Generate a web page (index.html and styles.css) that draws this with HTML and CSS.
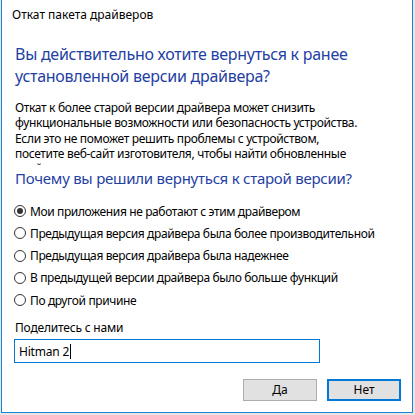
FILE: index.html
```html
<!DOCTYPE html>
<html lang="ru">
<head>
<meta charset="utf-8">
<title>Откат пакета драйверов</title>
<link rel="stylesheet" href="styles.css">
</head>
<body>
<div class="window">
  <div class="titlebar">Откат пакета драйверов</div>
  <div class="content">
    <h1 class="instruction">Вы действительно хотите вернуться к ранее<br>установленной версии драйвера?</h1>
    <div class="desc">
      <div class="line">Откат к более старой версии драйвера может снизить</div>
      <div class="line">функциональные возможности или безопасность устройства.</div>
      <div class="line">Если это не поможет решить проблемы с устройством,</div>
      <div class="line">посетите веб-сайт изготовителя, чтобы найти обновленные</div>
      <div class="line">драйверы.</div>
    </div>
    <h2 class="instruction second">Почему вы решили вернуться к старой версии?</h2>
    <div class="options">
      <div class="option"><span class="radio checked"></span><span>Мои приложения не работают с этим драйвером</span></div>
      <div class="option"><span class="radio"></span><span>Предыдущая версия драйвера была более производительной</span></div>
      <div class="option"><span class="radio"></span><span>Предыдущая версия драйвера была надежнее</span></div>
      <div class="option"><span class="radio"></span><span>В предыдущей версии драйвера было больше функций</span></div>
      <div class="option"><span class="radio"></span><span>По другой причине</span></div>
    </div>
    <div class="share-label">Поделитесь с нами</div>
    <div class="textbox"><span>Hitman 2</span><span class="caret"></span></div>
  </div>
  <div class="buttons">
    <div class="btn">Да</div>
    <div class="btn default">Нет</div>
  </div>
</div>
</body>
</html>
```
FILE: styles.css
```css
html, body {
  margin: 0;
  padding: 0;
}
body {
  width: 415px;
  height: 415px;
  background: #e6e6e6;
  font-family: "Noto Sans", "DejaVu Sans", sans-serif;
  font-size: 12px;
  color: #000;
  overflow: hidden;
}
.window {
  margin-left: 1px;
  width: 410px;
  height: 412px;
  background: #fff;
  border-left: 1px solid #1883d7;
  border-right: 1px solid #1883d7;
  border-bottom: 1px solid #1883d7;
  display: flex;
  flex-direction: column;
}
.titlebar {
  padding: 7px 0 0 10px;
  line-height: 16px;
  height: 16px;
}
.content {
  padding: 20px 11px 0 12px;
  display: flex;
  flex-direction: column;
}
.instruction {
  margin: 0;
  font-weight: normal;
  font-size: 16px;
  line-height: 22px;
  color: #1f41a3;
  padding-left: 1px;
  white-space: nowrap;
  letter-spacing: -0.27px;
}
.instruction.second {
  margin-top: 2px;
  font-size: 15px;
  letter-spacing: -0.25px;
}
.desc {
  margin-top: 13px;
  height: 65px;
  overflow: hidden;
  line-height: 15.3px;
  padding-left: 1px;
  letter-spacing: -0.33px;
}
.line {
  white-space: nowrap;
}
.options {
  margin-top: 11px;
  display: flex;
  flex-direction: column;
  letter-spacing: -0.38px;
}
.option {
  height: 22.25px;
  display: flex;
  align-items: center;
  gap: 4px;
  white-space: nowrap;
}
.radio {
  width: 10px;
  height: 10px;
  border: 1px solid #333;
  border-radius: 50%;
  display: flex;
  align-items: center;
  justify-content: center;
  flex: none;
}
.radio.checked::after {
  content: "";
  width: 6px;
  height: 6px;
  border-radius: 50%;
  background: #333;
}
.share-label {
  margin-top: 9px;
  line-height: 16px;
  padding-left: 1px;
  letter-spacing: -0.2px;
}
.textbox {
  margin-top: 3px;
  width: 300px;
  height: 22px;
  border: 1px solid #0078d7;
  display: flex;
  align-items: center;
  padding-left: 4px;
  letter-spacing: -0.2px;
}
.caret {
  width: 1px;
  height: 15px;
  background: #000;
  margin-left: 1px;
}
.buttons {
  margin-top: 16px;
  display: flex;
  justify-content: flex-end;
  gap: 10px;
  padding-right: 11px;
}
.btn {
  width: 72px;
  height: 20px;
  border: 1px solid #adadad;
  background: #e1e1e1;
  display: flex;
  align-items: center;
  justify-content: center;
  line-height: 16px;
}
.btn.default {
  width: 70px;
  height: 18px;
  border: 2px solid #0078d7;
}
```
